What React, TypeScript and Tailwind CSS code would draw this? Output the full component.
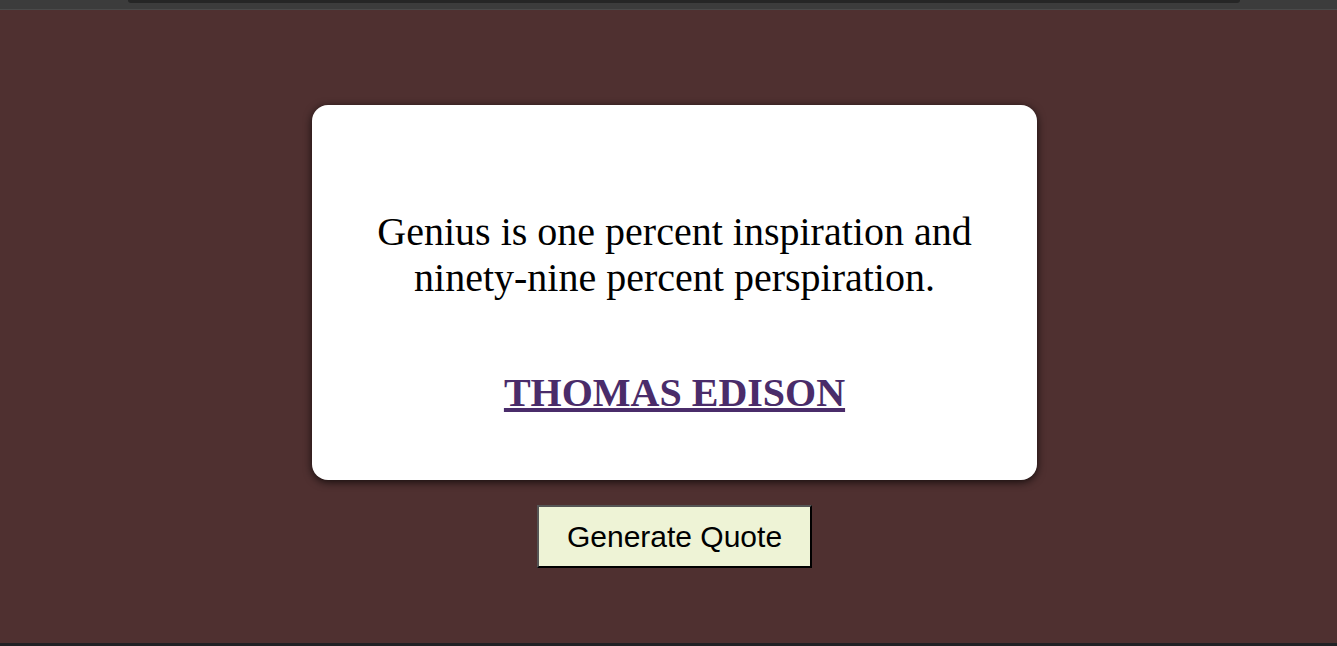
import React from "react";

export default function App() {
  return (
    <div className="w-[1337px] h-[646px] flex flex-col bg-[#4f3030] overflow-hidden">
      <div className="h-[10px] bg-[#3c3c3c] flex justify-center border-b border-[#4a4a4a]">
        <div className="w-[1112px] h-[3px] bg-[#262626] rounded-b-[4px] ml-[31px]" />
      </div>
      <div className="flex-1 flex flex-col items-center pt-[95px] pl-[12px]">
        <div className="w-[725px] h-[375px] bg-white rounded-[16px] shadow-[0_2px_8px_rgba(0,0,0,0.75)] flex flex-col items-center pt-[104px] font-['Liberation_Serif',serif]">
          <p className="text-[40px] leading-[46px] text-black text-center">
            Genius is one percent inspiration and
            <br />
            ninety-nine percent perspiration.
          </p>
          <a
            href="#"
            className="mt-[69px] text-[40px] leading-[46px] font-bold text-[#4a2c6a] underline"
          >
            THOMAS EDISON
          </a>
        </div>
        <button className="mt-[25px] h-[63px] w-[275px] bg-[#eef3d6] border-2 border-t-[#555] border-l-[#555] border-r-black border-b-black font-['Liberation_Sans',Arial,sans-serif] text-[30px] text-black">
          Generate Quote
        </button>
      </div>
      <div className="h-[3px] bg-[#202124]" />
    </div>
  );
}
